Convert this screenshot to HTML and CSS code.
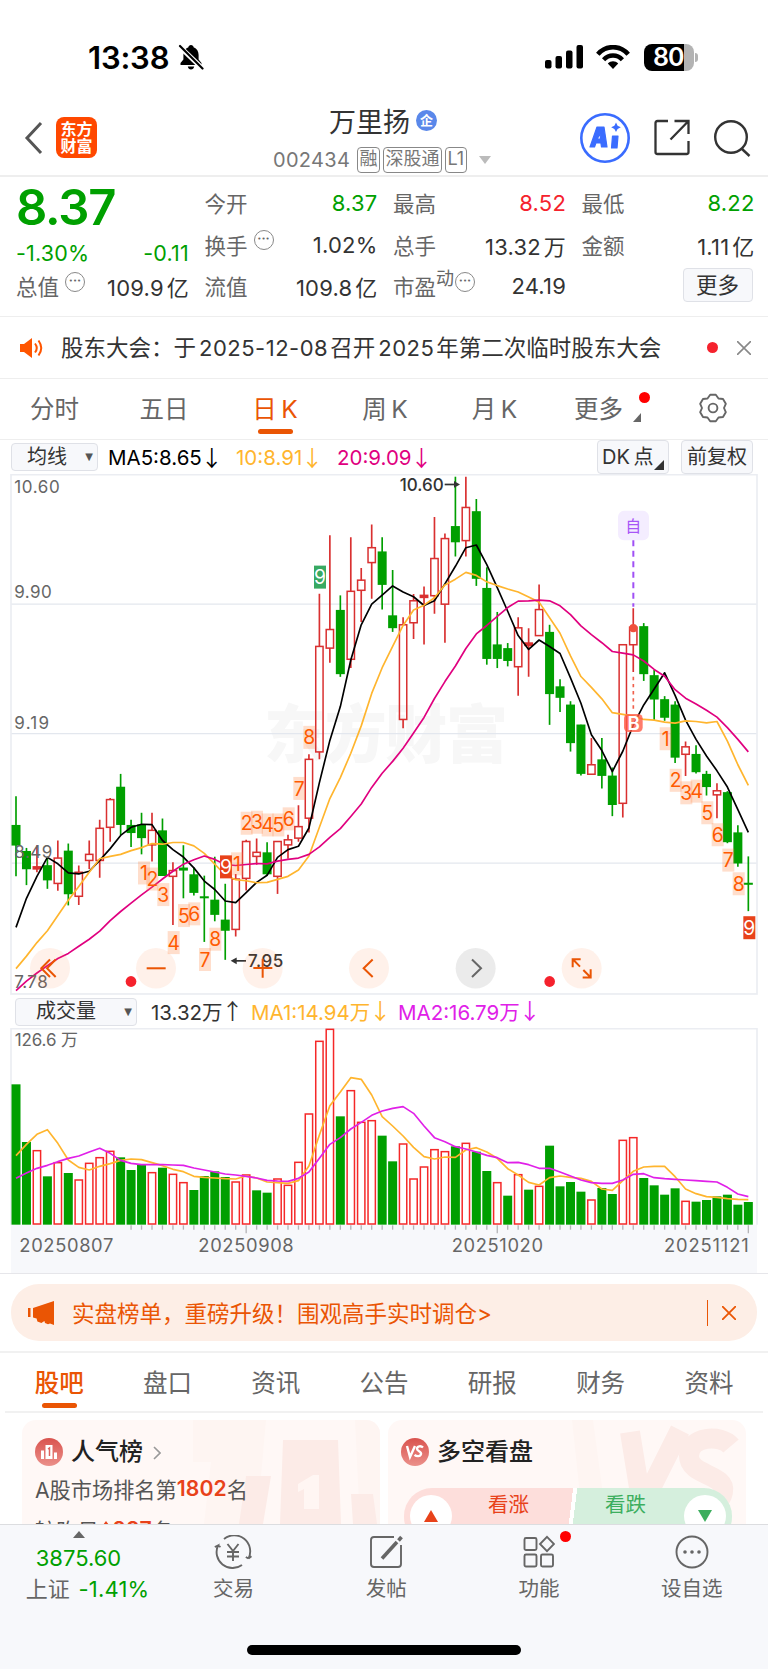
FILE: index.html
```html
<!DOCTYPE html>
<html lang="zh-CN">
<head>
<meta charset="utf-8">
<meta name="viewport" content="width=device-width, initial-scale=1">
<title>万里扬 002434</title>
<link rel="stylesheet" href="styles.css">
</head>
<body>
<div class="phone">
  <div class="status">
    <span class="status-time">13:38</span>
    <svg class="status-bell" width="26" height="28" viewBox="0 0 26 28"><path d="M13 2c-1.500 0-2.400 1-2.600 2.200C7 5.400 5.400 8.300 5.400 12v4.500L2.500 20v2h21v-2l-2.900-3.500V12c0-3.700-1.600-6.600-5-7.800C15.400 3 14.500 2 13 2zM9.800 23.500h6.400c-.3 2-1.600 3-3.200 3s-2.900-1-3.200-3z"/><path d="M1.500 3.500l23 22" stroke="#fff" stroke-width="5"/><path d="M2 3l22.500 22.500" stroke="#000" stroke-width="2.200" stroke-linecap="round"/></svg>
    <span class="grow"></span>
    <svg width="39" height="26" viewBox="0 0 39 26"><rect x="0" y="16" width="6.500" height="8.500" rx="2"/><rect x="10.500" y="12" width="6.500" height="12.500" rx="2"/><rect x="21" y="6.500" width="6.500" height="18" rx="2"/><rect x="31.500" y="1" width="6.500" height="23.500" rx="2"/></svg>
    <svg class="wifi" width="34" height="25" viewBox="0 0 34 25" fill="none" stroke="#000"><path d="M1.800 9.200C10-.2 24-.2 32.200 9.200" stroke-width="4.600"/><path d="M7.600 14.700c5.200-5.600 13.600-5.600 18.800 0" stroke-width="4.400"/><path d="M17 24l-5.200-5.600c3-2.900 7.400-2.900 10.400 0z" fill="#000" stroke="none"/></svg>
    <span class="battery"><b>80</b></span><i class="battery-cap"></i>
  </div>

  <header class="nav">
    <div class="nav-left">
      <svg width="20" height="34" viewBox="0 0 20 34" fill="none" stroke="#555" stroke-width="3"><path d="M17 2L3 17l14 15"/></svg>
      <div class="logo"><span>东方</span><span>财富</span></div>
    </div>
    <div class="nav-title">
      <div class="name">万里扬<i class="qi">企</i></div>
      <div class="code"><span class="code-num">002434</span><em>融</em><em>深股通</em><em>L1</em><svg width="12" height="8" viewBox="0 0 12 8"><path d="M0 0h12L6 8z" fill="#bbb"/></svg></div>
    </div>
    <div class="nav-right">
      <svg width="50" height="50" viewBox="0 0 50 50"><circle cx="25" cy="25" r="23.700" fill="none" stroke="#3a6cff" stroke-width="2.600"/><g fill="#3a6cff" stroke="#3a6cff" stroke-width="1.200" stroke-linejoin="round"><path fill-rule="evenodd" d="M10 34L17 14h7l3 20h-5.500l-.6-4h-5l-1.400 4zM17.300 26h3.200l-.5-5.500z"/><path d="M32.500 23h5.500l-1 12h-5.500z"/></g><path d="M36 9.500l1.600 3.200 3.200 1.600-3.200 1.600L36 19.100l-1.600-3.200-3.200-1.600 3.200-1.600z" fill="#3a6cff"/></svg>
      <svg width="36" height="37" viewBox="0 0 36 37" fill="none" stroke="#333" stroke-width="2.300"><path d="M14 2H3.500Q1.500 2 1.500 4v29q0 2 2 2h29q2 0 2-2V22M20.500 2h14v13M34 2.500L16.500 20.500"/></svg>
      <svg width="38" height="38" viewBox="0 0 38 38" fill="none" stroke="#333" stroke-width="2.400"><circle cx="18" cy="18" r="15.800"/><path d="M28.500 29.500l8 7.500"/></svg>
    </div>
  </header>

  <section class="quote">
    <div class="big"><span class="price">8.37</span><div class="pair green"><span>-1.30%</span><span>-0.11</span></div></div>
    <div class="pair"><label>今开</label><span class="green">8.37</span></div>
    <div class="pair"><label>最高</label><span class="red">8.52</span></div>
    <div class="pair"><label>最低</label><span class="green">8.22</span></div>
    <div class="pair"><label>换手<i class="dots">•••</i></label><span>1.02%</span></div>
    <div class="pair"><label>总手</label><span>13.32<u>万</u></span></div>
    <div class="pair"><label>金额</label><span>1.11<u>亿</u></span></div>
    <div class="pair"><label>总值<i class="dots">•••</i></label><span>109.9<u>亿</u></span></div>
    <div class="pair"><label>流值</label><span>109.8<u>亿</u></span></div>
    <div class="pair"><label>市盈<sup>动</sup><i class="dots tight">•••</i></label><span>24.19</span></div>
    <div class="pair end"><button class="more">更多</button></div>
  </section>

  <section class="notice">
    <svg width="23" height="20" viewBox="0 0 23 20"><path d="M0 6h4l8-6v20l-8-6H0z" fill="#ff5500"/><path d="M15 5.500q3.500 4.500 0 9M18.500 2.500q5.500 7.500 0 15" fill="none" stroke="#ff5500" stroke-width="2"/></svg>
    <p>股东大会：于<s>2025-12-08</s>召开<s>2025</s>年第二次临时股东大会</p>
    <i class="dot"></i>
    <svg class="close" width="14" height="14" viewBox="0 0 14 14" stroke="#888" stroke-width="1.600"><path d="M0 0l14 14M14 0L0 14"/></svg>
  </section>

  <nav class="periods">
    <span>分时</span><span>五日</span><span class="on">日 K</span><span>周 K</span><span>月 K</span>
    <span class="has-more">更多<i class="dot"></i><svg width="8" height="9" viewBox="0 0 8 9"><path d="M8 0v9H0z" fill="#666"/></svg></span>
    <span><svg width="30" height="30" viewBox="0 0 30 30" fill="none" stroke="#666" stroke-width="1.900" stroke-linejoin="round"><path d="M17.800 1.800h-5.600L9.500 5.500 5 6l-2.800 4.800L4 15l-1.800 4.200L5 24l4.500.5 2.700 3.700h5.600l2.700-3.700L25 24l2.800-4.800L26 15l1.800-4.200L25 6l-4.500-.5z"/><circle cx="15" cy="15" r="4.400"/></svg></span>
  </nav>

  <section class="indicators">
    <button class="select">均线<i>▼</i></button>
    <span class="ma a">MA5:8.65<b>↓</b></span><span class="ma b">10:8.91<b>↓</b></span><span class="ma c">20:9.09<b>↓</b></span>
    <span class="grow"></span>
    <button class="flat dk">DK 点<svg width="10" height="10" viewBox="0 0 10 10"><path d="M10 0v10H0z" fill="#333"/></svg></button>
    <button class="flat">前复权</button>
  </section>

  <svg id="kline" class="kline" viewBox="0 12 2304 1541" preserveAspectRatio="none"></svg>

  <section class="vol-head">
    <button class="select wide">成交量<i>▼</i></button>
    <span class="ma k">13.32万<b>↑</b></span><span class="ma b">MA1:14.94万<b>↓</b></span><span class="ma v">MA2:16.79万<b>↓</b></span>
  </section>
  <svg id="volume" class="volume" viewBox="0 114 2304 735" preserveAspectRatio="none"></svg>

  <section class="promo">
    <div class="banner">
      <svg width="27" height="24" viewBox="0 0 27 24" fill="#ea5504"><path d="M0 7h2.500v9H0zM5 7l21-7v24l-4-1.500-2 .8-3-1.300-.6-2-3 2-4-1.500-.8-3L5 16.500z"/></svg>
      <p>实盘榜单，重磅升级！围观高手实时调仓&gt;</p>
      <i class="bar"></i>
      <svg width="14" height="14" viewBox="0 0 14 14" stroke="#ea5504" stroke-width="1.800"><path d="M0 0l14 14M14 0L0 14"/></svg>
    </div>
  </section>

  <nav class="sections">
    <span class="on">股吧</span><span>盘口</span><span>资讯</span><span>公告</span><span>研报</span><span>财务</span><span>资料</span>
  </nav>

  <section class="cards">
    <article class="card">
      <svg class="art" width="358" height="104" viewBox="0 0 358 104"><path d="M171 0h73l-5 56h-15l-6 48h-36l7-62h-18zM333 0h25v104h-20z" fill="#fef5f2"/><path d="M224 56h25l-8 48h-24zM261 20h55l3 84h-61zM329 74h22l4 30h-24z" fill="#fcebe7"/><path d="M276 64l15-9h6v34h-15V69l-6 3z" fill="#fff6f3"/></svg>
      <h3><svg width="28" height="28" viewBox="0 0 28 28"><defs><linearGradient id="disc" x2="0" y2="1"><stop stop-color="#d9534e"/><stop offset="1" stop-color="#eb908a"/></linearGradient></defs><circle cx="14" cy="14" r="14" fill="url(#disc)"/><path d="M6 12.500h3V21H6zM10.500 7h7v14h-7zM19 14.500h3V21h-3z" fill="#fff"/><path d="M13 11l1.500-1v8" stroke="#dd645e" stroke-width="1.500" fill="none"/></svg>人气榜<svg class="chev" width="8" height="14" viewBox="0 0 8 14" fill="none" stroke="#999" stroke-width="1.600"><path d="M1 1l6 6-6 6"/></svg></h3>
      <p>A股市场排名第<b>1802</b>名</p>
      <p>较昨日<svg width="14" height="16" viewBox="0 0 14 16"><path d="M7 0l6 8H9.500v8h-5V8H1z" fill="#e8421a"/></svg><b>287</b>名</p>
    </article>
    <article class="card vs">
      <svg class="art" width="358" height="104" viewBox="0 0 358 104" fill="none"><path d="M184 0h21l14 104h-24z" fill="#fef5f2"/><path d="M242 12l12 74L292 10" stroke="#fcebe7" stroke-width="20"/><path d="M343 26c-10-12-42-10-42 10s38 18 34 36-26 18-44 10" stroke="#fcebe7" stroke-width="20"/></svg>
      <h3><svg width="28" height="28" viewBox="0 0 28 28"><circle cx="14" cy="14" r="14" fill="url(#disc)"/><path d="M6 8l3 11 5-11M22 9.500c-2-2-6-1.500-6 1.200s4.700 2.400 4 5.300-4.500 2.600-6.500.8" fill="none" stroke="#fff" stroke-width="2.400"/></svg>多空看盘</h3>
      <div class="pill">
        <div class="up"><i><svg width="14" height="12" viewBox="0 0 14 12"><path d="M7 0l7 12H0z" fill="#e8421a"/></svg></i><span>看涨<small>41%</small></span></div>
        <div class="down"><span>看跌<small>59%</small></span><i><svg width="14" height="12" viewBox="0 0 14 12"><path d="M0 0h14L7 12z" fill="#3cae5e"/></svg></i></div>
      </div>
    </article>
  </section>

  <footer class="dock">
    <div class="index"><svg width="12" height="7" viewBox="0 0 12 7"><path d="M6 0l6 7H0z" fill="#666"/></svg><span class="green">3875.60</span><span>上证 <b class="green">-1.41%</b></span></div>
    <div class="item"><svg width="38" height="34" viewBox="0 0 38 34" fill="none" stroke="#666" stroke-width="1.900"><path d="M10 4A16 16 0 0 1 34.500 23.500l3-2.200M34.500 23.500l-2.700-1.500M28 30A16 16 0 0 1 4 10.500L.8 12M4 10.500l2.500 1.500M13.500 9l5.500 7 5.500-7M13 17h12M13 21.500h12M19 16v10"/></svg>交易</div>
    <div class="item"><svg width="34" height="34" viewBox="0 0 34 34" fill="none" stroke="#666" stroke-width="1.900"><path d="M25 2H5Q2 2 2 5v24q0 3 3 3h24q3 0 3-3V10"/><path d="M13 23.500L28 7" stroke-width="3.600"/><path d="M29.500 5.500l3-3.500" stroke-width="3.600"/></svg>发帖</div>
    <div class="item"><svg width="32" height="32" viewBox="0 0 32 32" fill="none" stroke="#666" stroke-width="1.900"><rect x="1.500" y="2" width="12" height="12" rx="1.500"/><rect x="1.500" y="18.500" width="12" height="12" rx="1.500"/><rect x="18" y="18.500" width="12" height="12" rx="1.500"/><path d="M24 .8l7 7.200-7 7.200L17 8z"/></svg>功能<i class="dot"></i></div>
    <div class="item"><svg width="34" height="34" viewBox="0 0 34 34" fill="none" stroke="#666" stroke-width="1.900"><circle cx="17" cy="17" r="15.500"/><g fill="#666" stroke="none"><circle cx="10" cy="17" r="1.800"/><circle cx="17" cy="17" r="1.800"/><circle cx="24" cy="17" r="1.800"/></g></svg>设自选</div>
    <div class="home"></div>
  </footer>
</div>
<script src="chart.js"></script>
</body>
</html>
```

FILE: styles.css
```css
* { box-sizing: border-box; }
body { margin: 0; background: #fff; }
.phone { width: 768px; height: 1669px; overflow: hidden; display: flex; flex-direction: column; font-family: Inter, "Noto Sans CJK SC", sans-serif; color: #333; position: relative; }
.phone > * { flex: none; }
svg { display: block; flex: none; }
i, em { font-style: normal; }
u, s { text-decoration: none; }
button { font: inherit; color: inherit; padding: 0; border: 1px solid #dfe1e7; background: #f7f8fb; border-radius: 4px; }
p, h3 { margin: 0; font-weight: 400; }
.grow { flex: 1; }
.green { color: #00a000; }
.red { color: #f5222d; }
.dot { width: 11px; height: 11px; border-radius: 50%; background: #f5222d; }

.status { height: 90px; padding: 24px 70px 0 88px; display: flex; align-items: center; color: #000; }
.status-time { font-size: 31px; font-weight: 600; letter-spacing: -.2px; width: 90px; }
.wifi { margin: 0 14px 0 12px; }
.battery { width: 50px; height: 27px; border-radius: 8px; background: linear-gradient(90deg, #000 79%, #b3b3b3 79%); color: #fff; font-size: 25px; line-height: 27px; padding-left: 9px; letter-spacing: -1px; }
.battery b { font-weight: 600; }
.battery-cap { width: 3px; height: 9px; background: #b3b3b3; border-radius: 0 3px 3px 0; margin-left: 1px; }

.nav { height: 87px; border-bottom: 2px solid #eee; display: grid; grid-template-columns: 273px 1fr 188px; }
.nav-left { display: flex; align-items: center; padding: 8px 0 0 24px; gap: 12px; }
.logo { width: 41px; height: 41px; border-radius: 8px; background: #ff4800; color: #fff; font-size: 16px; font-weight: 700; line-height: 17px; display: flex; flex-direction: column; align-items: center; justify-content: center; }
.nav-title { padding-top: 12px; }
.name { height: 36px; display: flex; align-items: center; gap: 6px; font-size: 27px; padding-left: 56px; }
.qi { width: 21px; height: 21px; border-radius: 50%; background: #5a88ea; color: #fff; font-size: 13px; line-height: 20px; text-align: center; font-weight: 700; margin-top: 1px; }
.code { height: 34px; margin-top: 5px; display: flex; align-items: center; gap: 3px; color: #777; }
.code-num { font-size: 20px; width: 81px; letter-spacing: .3px; }
.code em { height: 26px; border: 1.500px solid #888; border-radius: 4px; font-size: 18px; line-height: 22px; padding: 0 1.500px; }
.code svg { margin-left: 9px; }
.nav-right { display: flex; align-items: center; padding-top: 8px; }
.nav-right svg:nth-child(2) { margin: 0 23px 0 24px; }

.quote { height: 140px; border-bottom: 1px solid #eee; padding: 5px 15px 0 16px; display: grid; grid-template-columns: repeat(4, 172px); column-gap: 16.500px; grid-template-rows: 42px 41px 42px; font-size: 22px; }
.big { grid-row: 1 / 3; display: flex; flex-direction: column; color: #00a000; }
.price { font-size: 49px; font-weight: 600; line-height: 51px; height: 56px; letter-spacing: -1.200px; }
.pair { display: flex; align-items: center; justify-content: space-between; letter-spacing: .2px; }
.pair > span { margin-right: -1px; }
.big .pair { height: 40px; flex: none; font-size: 21.500px; }
.pair label { display: flex; align-items: center; color: #666; font-size: 21.500px; letter-spacing: 0; margin-top: -1px; }
.pair u { margin-left: 3px; }
.pair.end { justify-content: flex-end; }
.dots { width: 20px; height: 20px; border: 1.500px solid #888; border-radius: 50%; font: 7px/17px "DejaVu Sans"; text-align: center; margin: -8px 0 0 6px; color: #666; letter-spacing: 0; display: block; }
.dots.tight { margin-left: 1px; }
.pair sup { font-size: 18px; line-height: 18px; margin-top: -13px; }
.more { width: 70px; height: 34px; font-size: 21.500px; line-height: 30px; margin: -2px 1px 0 0; }

.notice { height: 62px; border-bottom: 1px solid #eee; display: flex; align-items: center; padding: 0 17px 0 20px; }
.notice p { width: 646px; margin: -3px 0 0 18px; font-size: 22.500px; white-space: nowrap; }
.notice s { margin: 0 2px 0 3px; font-size: 22px; letter-spacing: .5px; }
.close { margin-left: 19px; }

.periods { height: 61px; position: relative; display: grid; grid-template-columns: 109px 110px 112px 108px 111px 106px 114px; border-bottom: 1px solid #eee; color: #666; font-size: 24.500px; }
.periods span { display: flex; align-items: center; justify-content: center; position: relative; padding-bottom: 4px; word-spacing: -2.500px; }
.periods span:last-child { padding-bottom: 2px; }
.periods .on { color: #ea5504; font-weight: 400; }
.on::after { content: ""; position: absolute; bottom: 5px; width: 35px; height: 5px; border-radius: 3px; background: #ea5504; }
.periods .has-more { padding-right: 9px; }
.has-more .dot { position: absolute; left: 89px; top: 13px; background: #f00; }
.has-more svg { position: absolute; left: 83px; top: 34px; }

.indicators { height: 34px; display: flex; align-items: center; padding: 0 15px 0 11px; font-size: 20px; }
.select { width: 87px; height: 28px; display: flex; align-items: center; font-size: 20px; line-height: 24px; padding: 0 4px 1px 15px; justify-content: space-between; }
.select i { font: 10px "DejaVu Sans"; color: #555; }
.ma { white-space: nowrap; font-size: 20.500px; letter-spacing: 0; display: flex; align-items: center; }
.ma b { font: 22px/26px "Noto Sans CJK SC"; width: 18px; margin: -3px 0 0 -1px; }
.ma.a { width: 128px; margin-left: 10px; color: #000; }
.ma.b { color: #ffb52e; }
.ma.c { color: #e0007f; }
.indicators .b { width: 101px; }
.flat { width: 72px; height: 34px; line-height: 29px; position: relative; }
.flat.dk { margin-right: 12px; text-align: left; padding-left: 4px; word-spacing: -2px; }
.dk svg { position: absolute; right: 4px; bottom: 3px; }

.kline { width: 768px; height: 521px; }
.vol-head { height: 33px; display: flex; align-items: center; padding: 0 15px; }
.select.wide { width: 122px; padding-left: 20px; }
.vol-head .ma { padding-bottom: 2px; }
.ma.k { width: 100px; margin-left: 14px; }
.vol-head .b { width: 147px; }
.ma.v { color: #e020e8; }
.volume { width: 768px; height: 245px; }

.promo { height: 80px; border-top: 1px solid #e6e6ea; border-bottom: 2px solid #f1f1f1; padding: 10px 11px; }
.banner { height: 57px; border-radius: 28px; background: #fdeee6; display: flex; align-items: center; padding: 0 21px 0 17px; color: #ea5504; }
.banner p { flex: 1; margin: -2px 0 0 17px; font-size: 22.500px; }
.bar { width: 1px; height: 26px; background: #ea5504; margin-right: 14px; }

.sections { height: 60px; margin: 0 5px; border-bottom: 2px solid #f1f1f1; display: grid; grid-template-columns: repeat(7, 108.300px); color: #666; font-size: 24.500px; }
.sections span { display: flex; align-items: center; justify-content: center; position: relative; padding-bottom: 1px; }
.sections .on { color: #ea5504; font-weight: 500; }
.sections .on::after { bottom: 3px; }

.cards { height: 111px; overflow: hidden; padding: 7px 22px 0; display: grid; grid-template-columns: 358px 358px; gap: 8px; }
.card { position: relative; height: 140px; border-radius: 14px; background: #fff8f6; padding: 16px 13px; font-size: 21.200px; color: #555; overflow: hidden; }
.art { position: absolute; left: 0; top: 0; }
.card > :not(.art) { position: relative; }
.card h3 { height: 32px; display: flex; align-items: center; font-size: 24px; line-height: 28px; font-weight: 500; color: #222; padding-bottom: 1px; }
.card h3 svg:first-child { margin: 1px 8px 0 0; }
.chev { margin: 2px 0 0 10px; }
.card p { height: 38px; display: flex; align-items: center; margin-top: 1px; }
.card p + p { margin-top: 3px; }
.card b { color: #e8421a; font-weight: 600; letter-spacing: .1px; }
.pill { margin: 20px 0 0 3px; width: 328px; height: 57px; border-radius: 28px; overflow: hidden; display: flex; background: linear-gradient(97deg, #fddedb 50.500%, #fff 50.500%, #fff 51.700%, #d5efdd 51.700%); font-size: 20.500px; }
.pill > div { flex: 1; display: flex; }
.pill i { width: 42px; height: 42px; border-radius: 50%; background: #fff; margin: 7px 6px; display: flex; align-items: center; justify-content: center; }
.pill span { flex: 1; line-height: 30px; padding-top: 2px; }
.pill small { display: block; font-size: 20px; line-height: 30px; }
.up { color: #e8421a; } .up span { padding-left: 30px; }
.down { color: #3cae5e; } .down span { padding-left: 37px; }

.dock { height: 145px; border-top: 1px solid #dcdde0; background: #f7f8fb; display: grid; grid-template-columns: 157px repeat(4, 152.800px); position: relative; color: #666; font-size: 20.500px; }
.index { display: flex; flex-direction: column; align-items: center; padding: 6px 0 0 0; font-size: 22px; line-height: 31px; white-space: nowrap; }
.index span { padding-left: 16px; margin-left: -16px; }
.index span:last-child { margin-left: 2px; word-spacing: 2px; letter-spacing: .2px; }
.index svg { margin: 0 0 5px; }
.index b { font-weight: 400; }
.item { display: flex; flex-direction: column; align-items: center; padding-top: 10px; position: relative; line-height: 30px; }
.item svg { height: 34px; margin-bottom: 5px; }
.item .dot { position: absolute; left: 97px; top: 6px; background: #f00; }
.home { position: absolute; left: 247px; top: 120px; width: 274px; height: 10px; border-radius: 5px; background: #000; }

.lbl { font-size: 51px; fill: #666; }
.num { font-size: 58px; text-anchor: middle; fill: #ff5a00; }
.inv { fill: #fff; }
.tip { font-size: 51px; font-weight: 500; fill: #333; }
.date { font-size: 55px; fill: #666; }
.mark { font-family: "Noto Sans CJK SC", sans-serif; font-weight: 900; font-size: 186px; fill: #f7f7f7; }
```

FILE: chart.js
```js
const STEP = 31.386, X0 = 48;
const x = i => +(X0 + STEP * i).toFixed(1);
const RED = '#d93030', GREEN = '#009f00';

// direction, high, body top, body bottom, low
const candles = `g965,1051,1110,1202 g1118,1128,1180,1228 r1110,1174,1180,1190 g1145,1170,1213,1239 r1096,1148,1223,1245 g1105,1127,1254,1288 r1170,1190,1261,1287 r1096,1137,1155,1180 r1035,1060,1155,1206 r970,975,1057,1100 g899,938,1049,1080 g1035,1051,1073,1115 g1014,1050,1088,1137 r1014,1066,1109,1158 g1031,1067,1200,1200 r1160,1185,1202,1346 g1110,1177,1184,1267 g1176,1197,1250,1259 g1200,1262,1266,1396 g1144,1272,1315,1335 g1224,1331,1362,1449 r1195,1210,1359,1380 r1094,1099,1208,1244 r1090,1131,1143,1168 g1101,1132,1195,1198 r1099,1099,1202,1254 r1079,1094,1109,1150 r992,1055,1089,1100 r841,856,1030,1072 r366,522,834,856 r193,472,527,570 g371,415,603,612 r199,359,560,586 r290,326,356,450 r161,230,274,381 g199,242,339,413 g296,431,467,479 r436,458,738,764 r367,387,452,500 r345,371,377,516 r139,262,372,425 r188,203,397,511 g20,167,213,256 r20,111,209,256 g86,123,321,343 g288,350,558,576 g420,517,558,586 g512,528,564,581 r436,467,582,668 r468,512,519,612 r339,413,490,490 g458,480,662,754 g619,641,673,716 g684,695,807,833 g754,754,898,904 r793,872,900,900 g793,857,904,942 g880,905,990,1024 r515,517,986,1028 r409,465,517,598 g453,463,603,624 g592,608,678,740 g669,679,732,742 g684,695,850,867 r803,819,841,905 g814,841,893,898 g890,900,937,963 r927,949,961,1030 g950,954,1100,1104 g1051,1073,1163,1174 g1143,1222,1226,1305`
  .split(' ').map(s => [s[0], ...s.slice(1).split(',').map(Number)]);

const ma5 = [1353,1267,1202,1146,1165,1192,1195,1187,1155,1120,1081,1057,1048,1049,1096,1123,1145,1177,1216,1241,1275,1280,1250,1220,1199,1146,1123,1113,1059,925,800,700,562,458,397,370,343,361,375,401,387,337,285,230,222,280,348,418,490,531,503,522,543,615,690,783,830,892,832,755,695,648,600,667,740,797,846,890,938,1005,1072];
const ma10 = [1475,1438,1398,1363,1318,1273,1232,1190,1150,1143,1137,1126,1117,1105,1107,1102,1102,1112,1134,1166,1198,1212,1215,1221,1220,1211,1202,1183,1142,1057,972,910,838,757,661,585,522,460,414,400,378,340,323,303,312,331,342,352,361,376,391,437,483,550,611,643,677,718,723,728,738,740,746,749,742,744,748,744,802,872,933];
const ma20 = [1540,1512,1488,1466,1445,1430,1409,1388,1364,1333,1306,1281,1257,1234,1210,1187,1166,1153,1142,1152,1167,1170,1167,1164,1165,1157,1152,1148,1137,1115,1087,1061,1025,988,939,897,862,823,778,732,676,626,580,528,485,460,433,407,388,387,385,387,402,428,461,487,511,537,542,547,565,590,610,650,675,692,711,731,762,797,834];

const line = (a, c, w) => `<polyline points="${a.map((v, i) => x(i) + ',' + v).join(' ')}" fill="none" stroke="${c}" stroke-width="${w}" stroke-linejoin="round"/>`;
const text = (cls, px, py, t, extra = '') => `<text class="${cls}" x="${px}" y="${py}" ${extra}>${t}</text>`;

let k = '';
[...'东方财富'].forEach((ch, i) => { k += text('mark', 792 + i * 182, 850, ch); });
k += [397, 780, 1163].map(y => `<path d="M33 ${y}H2271" stroke="#e3e7ee" stroke-width="4"/>`).join('');
k += '<rect x="33" y="14" width="2238" height="1536" fill="none" stroke="#ebedf2" stroke-width="5"/>';

candles.forEach(([d, h, t, b, l], i) => {
  const cx = x(i);
  if (d === 'g') {
    k += `<path d="M${cx} ${h}V${l}" stroke="${GREEN}" stroke-width="5"/><rect x="${cx - 13.5}" y="${t - 1}" width="27" height="${b - t + 2}" fill="${GREEN}"/>`;
  } else {
    k += `<path d="M${cx} ${h}V${t}M${cx} ${b}V${l}" stroke="${RED}" stroke-width="5"/><rect x="${cx - 11}" y="${t}" width="22" height="${b - t}" fill="${b - t < 9 ? RED : 'none'}" stroke="${RED}" stroke-width="4.500"/>`;
  }
});
k += line(ma5, '#000', 5) + line(ma10, '#ffb52e', 5) + line(ma20, '#e0007f', 5);

[['10.60', 68, 136], ['9.90', 379, 112], ['9.19', 765, 104], ['8.49', 1148, 114], ['7.78', 1533, 100]].forEach(([t, y, w]) => { k += text('lbl', 43, y, t, `textLength="${w}"`); });

const tags = [[1,432,1192],[2,457,1210],[3,490,1256],[4,521,1398],[5,552,1318],[6,583,1313],[7,615,1448],[8,646,1388],[9,678,1174,'#e8421a'],[1,711,1165],[2,740,1045],[3,771,1042],[4,803,1050],[5,835,1050],[6,866,1032],[7,898,942],[8,928,791],[9,960,317,'#38a962'],[1,1997,795],[2,2027,918],[3,2059,955],[4,2090,950],[5,2122,1014],[6,2153,1079],[7,2185,1154],[8,2216,1224],[9,2248,1354,'#e8421a']];
tags.forEach(([n, cx, cy, bg]) => {
  k += `<rect x="${cx - 18}" y="${cy - 34}" width="36" height="68" fill="${bg || '#ff7a33'}" fill-opacity="${bg ? 1 : .25}"/>` + text('num' + (bg ? ' inv' : ''), cx, cy + 21, n);
});

k += text('tip', 1199, 62, '10.60', 'textLength="132"') + '<path d="M1334 43h36" stroke="#333" stroke-width="5"/><path d="M1362 33l18 10-18 10z" fill="#333"/>';
k += text('tip', 744, 1471, '7.95', 'textLength="106"') + '<path d="M738 1452h-34" stroke="#333" stroke-width="5"/><path d="M710 1442l-18 10 18 10z" fill="#333"/>';

k += '<rect x="1854" y="121" width="93" height="87" rx="18" fill="#f4edff"/>' + text('num', 1900, 185, '自', 'style="fill:#a855f7;font-size:48px;font-weight:400"');
k += '<path d="M1900 208V405" stroke="#a050f5" stroke-width="6" stroke-dasharray="18 13"/><path d="M1900 612V710" stroke="#f0604d" stroke-width="5" stroke-dasharray="10 11"/><circle cx="1900" cy="468" r="12" fill="#f0503c"/>';
k += '<rect x="1872" y="722" width="56" height="53" rx="13" fill="#ff5a46" fill-opacity=".8"/>' + text('num inv', 1901, 768, 'B', 'style="font-size:56px;font-weight:600"');

[150, 468, 788, 1107, 1427, 1745].forEach((cx, i) => { k += `<circle cx="${cx}" cy="1474" r="60" fill="${i === 4 ? '#888' : '#ff7a33'}" fill-opacity="${i === 4 ? .17 : .1}"/>`; });
const icon = (d, c = '#ea5504') => `<path d="${d}" fill="none" stroke="${c}" stroke-width="6"/>`;
k += icon('M150 1448l-26 26 26 26M167 1448l-26 26 26 26') + icon('M440 1474h57') + icon('M760 1473h57M788 1446v56') + icon('M1118 1448l-27 26 27 26') + icon('M1416 1448l27 26-27 26', '#666') + icon('M1718 1471v-24h24M1720 1449l20 20M1772 1477v24h-24M1770 1499l-20-20');
k += '<circle cx="393" cy="1513" r="16" fill="#f5222d"/><circle cx="1649" cy="1513" r="16" fill="#f5222d"/>';
document.getElementById('kline').innerHTML = k;

// top edge of each volume bar; the baseline sits at 704
const bars = 'g284 g457 r481 g560 r517 g550 r569 r519 r502 r483 g503 g541 g524 r547 g534 r552 r577 g601 g559 g545 g562 r575 r554 g602 g609 r566 r585 r516 r371 r153 r117 g380 r301 r396 r391 g438 g515 r461 r566 r530 r478 r484 g470 r459 g486 g544 r577 g618 r553 g600 r588 g468 g590 g577 g606 r629 g595 g613 r450 r442 g565 g587 g615 g596 r633 g636 g631 g620 g615 g645 g637'.split(' ');
const v1 = [497,463,433,419,460,510,532,540,529,521,511,507,509,518,527,538,545,559,562,564,566,567,558,564,576,578,580,572,528,435,347,306,263,268,315,380,408,438,472,500,507,501,502,480,473,486,505,536,555,577,585,563,558,562,565,574,597,601,572,544,531,529,529,560,597,611,620,622,626,628,629];
const v2 = [565,549,535,526,515,505,498,486,475,490,511,520,524,524,524,525,526,534,540,546,552,555,559,564,571,573,574,565,546,505,463,443,417,397,376,363,355,350,370,408,443,455,470,477,486,496,503,518,517,524,535,535,546,558,570,578,580,580,570,553,551,563,566,568,570,572,574,576,592,612,620];

let v = '<rect x="33" y="704" width="2238" height="146" fill="#f7f8fb"/><path d="M33 704V116H2271V704" fill="none" stroke="#ebedf2" stroke-width="5"/>';
bars.forEach((b, i) => {
  const cx = x(i), t = +b.slice(1);
  v += b[0] === 'g'
    ? `<rect x="${cx - 13.5}" y="${t - 1}" width="27" height="${705 - t}" fill="${GREEN}"/>`
    : `<rect x="${cx - 11}" y="${t + 1}" width="22" height="${701 - t}" fill="#fff" stroke="#f52828" stroke-width="4.500"/>`;
  if (i > 10) v += `<path d="M${cx} 706V${i % 24 === 22 ? 730 : 719}" stroke="#b5b5b8" stroke-width="4"/>`;
});
v += line(v1, '#ffb52e', 5) + line(v2, '#e020e8', 5);
v += text('lbl', 44, 168, '126.6 万', 'textLength="190"');
[['20250807', 58, 282], ['20250908', 595, 286], ['20251020', 1355, 274], ['20251121', 1992, 254]].forEach(([t, px, w]) => { v += text('date', px, 785, t, `textLength="${w}"`); });
document.getElementById('volume').innerHTML = v;
```
